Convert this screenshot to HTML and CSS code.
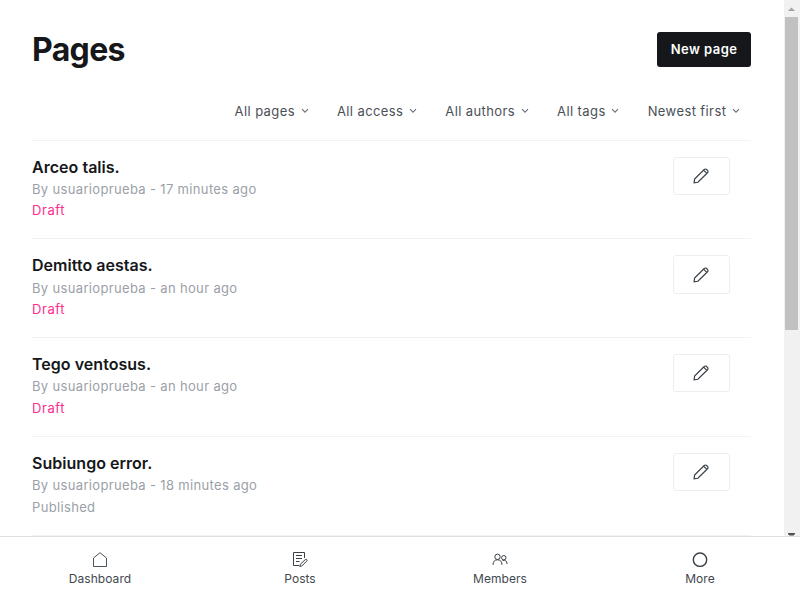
FILE: index.html
```
<!DOCTYPE html>
<html lang="en">
<head>
<meta charset="utf-8">
<title>Pages</title>
<link rel="stylesheet" href="styles.css">
</head>
<body>
<svg class="symbols" aria-hidden="true">
  <symbol id="chevron" viewBox="0 0 8 6"><path d="M1 1.2 4 4.2 7 1.2"/></symbol>
  <symbol id="pencil" viewBox="0 0 16 16"><path d="M1.1 14.9 1.6 11 11.2 1.5Q12.2.6 13.3 1.3L14.7 2.7Q15.4 3.8 14.5 4.8L4.9 14.3ZM10.600 2.200 13.800 5.400"/></symbol>
</svg>
<div class="app">
  <div class="viewport">
    <main class="content">
      <header class="header">
        <h1>Pages</h1>
        <a class="new-page">New page</a>
      </header>
      <nav class="filters">
        <span class="filter">All pages<svg><use href="#chevron"/></svg></span>
        <span class="filter">All access<svg><use href="#chevron"/></svg></span>
        <span class="filter">All authors<svg><use href="#chevron"/></svg></span>
        <span class="filter">All tags<svg><use href="#chevron"/></svg></span>
        <span class="filter">Newest first<svg><use href="#chevron"/></svg></span>
      </nav>
      <ul class="list">
        <li class="row">
          <div><h3>Arceo talis.</h3><p class="meta">By usuarioprueba - 17 minutes ago</p><p class="status draft">Draft</p></div>
          <a class="edit"><svg><use href="#pencil"/></svg></a>
        </li>
        <li class="row">
          <div><h3>Demitto aestas.</h3><p class="meta">By usuarioprueba - an hour ago</p><p class="status draft">Draft</p></div>
          <a class="edit"><svg><use href="#pencil"/></svg></a>
        </li>
        <li class="row">
          <div><h3>Tego ventosus.</h3><p class="meta">By usuarioprueba - an hour ago</p><p class="status draft">Draft</p></div>
          <a class="edit"><svg><use href="#pencil"/></svg></a>
        </li>
        <li class="row">
          <div><h3>Subiungo error.</h3><p class="meta">By usuarioprueba - 18 minutes ago</p><p class="status">Published</p></div>
          <a class="edit"><svg><use href="#pencil"/></svg></a>
        </li>
        <li class="row"></li>
      </ul>
    </main>
    <div class="scrollbar">
      <svg class="arrow" viewBox="0 0 16 17"><path d="M4 11 7.500 7.500 11 11z" fill="#a3a3a3"/></svg>
      <div class="thumb"></div>
      <svg class="arrow end" viewBox="0 0 16 4"><path d="M4 1h7v1L9.500 3.500h-4L4 2z" fill="#505050"/></svg>
    </div>
  </div>
  <nav class="tabs">
    <a class="tab"><svg class="house" viewBox="0 0 16 16"><path d="M1.500 14.500V6L8 .7l6.500 5.300v8.500z"/></svg>Dashboard</a>
    <a class="tab"><svg viewBox="0 0 16 16"><path d="M7 13.500H1.500V.5H12.500V6M4 3.500h6M4 6.500h6M4 9.500h3.500M7.800 14.500l.6-2.400 5-4.600q.8-.5 1.400.1t.1 1.400l-5 4.900z"/></svg>Posts</a>
    <a class="tab"><svg viewBox="0 0 16 16"><circle cx="5.500" cy="4.800" r="2.700"/><circle cx="11.800" cy="5.700" r="2.200"/><path d="M1 12.800Q1.200 7.800 5.500 7.800T10 12.800M10.500 8.500q4.200-1.200 4.600 3.500"/></svg>Members</a>
    <a class="tab"><svg viewBox="0 0 16 16"><circle class="ring" cx="8" cy="7.700" r="6.700"/></svg>More</a>
  </nav>
</div>
</body>
</html>
```
FILE: styles.css
```
* { box-sizing: border-box; margin: 0; padding: 0; }
body {
  font-family: Inter, "Liberation Sans", sans-serif;
  color: #15171a;
  background: #fff;
  overflow: hidden;
}
.symbols { display: none; }
svg { fill: none; stroke: #394047; flex: none; }
.app { height: 600px; display: flex; flex-direction: column; }
.viewport { height: 536px; display: flex; overflow: hidden; }
.content { flex: 1; padding: 32px 32.700px 0 32px; }
.header { height: 35px; display: flex; justify-content: space-between; align-items: flex-start; }
h1 { font-size: 32px; line-height: 36px; font-weight: 700; letter-spacing: -0.65px; }
.new-page {
  width: 94.500px; height: 34.500px; border-radius: 3px;
  background: #15171a; color: #fff;
  font-size: 13px; line-height: 35px; font-weight: 600; letter-spacing: 0.45px;
  text-align: center;
}
.filters {
  height: 72.700px; padding: 15px 11.300px 0 0;
  display: flex; justify-content: flex-end; align-items: center; gap: 28.300px;
  font-size: 13px; letter-spacing: 0.4px; color: #4b5057;
}
.filter { display: flex; align-items: center; gap: 5.700px; white-space: nowrap; }
.filter svg { width: 8px; height: 6px; stroke: #6b7076; stroke-width: 1.1; }
.list { list-style: none; }
.row {
  height: 98.750px; padding-top: 16px;
  display: flex; justify-content: space-between; align-items: flex-start;
  border-top: 1px solid #f1f2f4;
}
h3 { font-size: 16px; line-height: 21px; font-weight: 600; letter-spacing: 0.03px; }
.meta, .status { font-size: 13px; line-height: 22px; letter-spacing: 0.34px; color: #9b9fa8; }
.meta { margin-top: 0.15px; }
.status { margin-top: 0.6px; line-height: 21px; }
.draft { color: #fb2d8d; letter-spacing: 0.55px; }
.edit {
  width: 57px; height: 38.200px; margin-right: 21.300px; padding-right: 1px;
  display: flex; align-items: center; justify-content: center;
  border: 1px solid #ebeef0; border-radius: 3px;
}
.edit svg { width: 16px; height: 16px; stroke-width: 1.2; }
.scrollbar { position: relative; width: 16px; background: #f1f1f1; }
.arrow { display: block; width: 16px; height: 17px; stroke: none; }
.thumb { height: 313px; margin: 0 2px 0 1px; background: #c1c1c1; }
.end { position: absolute; bottom: 0; height: 4px; }
.tabs {
  height: 64px; border-top: 1px solid #dce0e5; background: #fff;
  display: grid; grid-template-columns: repeat(4, 1fr);
}
.tab {
  padding-top: 15px;
  display: flex; flex-direction: column; align-items: center;
  font-size: 12px; line-height: 22px; letter-spacing: 0.05px; color: #42484f;
}
.tab svg { width: 16px; height: 16px; }
.tab .house { stroke-width: 0.9; }
.ring { stroke-width: 1.4; }
```
